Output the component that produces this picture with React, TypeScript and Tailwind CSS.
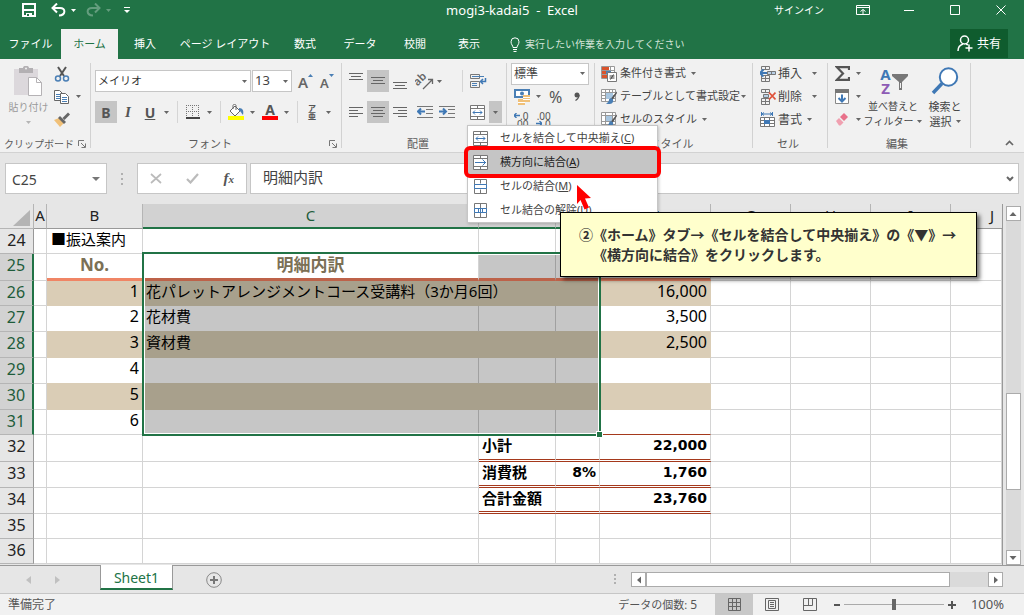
import React from "react";

type Kids = { children?: React.ReactNode };

const Caret = ({ className = "text-[#666]" }: { className?: string }) => (
  <svg width="5" height="3" viewBox="0 0 5 3" className={"shrink-0 " + className} aria-hidden="true">
    <path d="M0 0h5L2.5 3z" fill="currentColor" />
  </svg>
);

const Icon = ({ w = 16, h = 16, children }: Kids & { w?: number; h?: number }) => (
  <svg width={w} height={h} viewBox={`0 0 ${w} ${h}`} fill="none" className="shrink-0" aria-hidden="true">
    {children}
  </svg>
);

const Sep = () => <span className="h-[22px] w-px shrink-0 bg-[#d5d5d5]" />;

const Launcher = () => (
  <Icon w={8} h={8}>
    <path d="M.5 6V.5H6M3 3l4 4M7.5 3.500V7.500H3.500" stroke="#777" />
  </Icon>
);

function Group({
  label,
  className,
  labelClass = "text-[11px]",
  launcher,
  children,
}: Kids & { label: string; className: string; labelClass?: string; launcher?: boolean }) {
  return (
    <section className={"relative flex shrink-0 flex-col " + className}>
      <div className="flex-1">{children}</div>
      <div className="flex h-4 items-center pr-[5px] text-[#5a5a5a]">
        <span className={"flex-1 text-center whitespace-nowrap " + labelClass}>{label}</span>
        {launcher && (
          <button aria-label={label + "の設定"}>
            <Launcher />
          </button>
        )}
      </div>
      <span className="absolute top-1 right-0 bottom-1 w-px bg-[#d2d2d2]" />
    </section>
  );
}

/* ---------- title bar ---------- */

const quickAccess = (
  <div className="flex h-5 flex-1 items-center text-white">
    <button aria-label="上書き保存" className="ml-[22px]">
      <Icon w={14} h={14}>
        <path d="M1 1h12v12H1z" stroke="#fff" strokeWidth="2" />
        <path d="M2 7h10" stroke="#fff" strokeWidth="2" />
        <path d="M4 10h6v4H4z" fill="#fff" />
        <path d="M5 11h2v2H5z" fill="#217346" />
      </Icon>
    </button>
    <button aria-label="元に戻す" className="ml-[15px] flex items-center gap-[5px]">
      <Icon w={15} h={14}>
        <path d="M2 5h7c6 0 6 7-1 7.500" stroke="#fff" strokeWidth="2" />
        <path d="M6 .5L1.500 5 6 9.500" stroke="#fff" strokeWidth="2" />
      </Icon>
      <Caret className="text-white" />
    </button>
    <button aria-label="やり直し" className="ml-[10px] flex items-center gap-[5px] opacity-30">
      <Icon w={15} h={14}>
        <path d="M13 5H6c-6 0-6 7 1 7.500" stroke="#fff" strokeWidth="2" />
        <path d="M9 .5L13.500 5 9 9.500" stroke="#fff" strokeWidth="2" />
      </Icon>
      <Caret className="text-white" />
    </button>
    <button aria-label="クイック アクセス ツール バーのユーザー設定" className="ml-[13px]">
      <Icon w={6} h={6}>
        <path d="M0 .5h6" stroke="#fff" />
        <path d="M0 3h6L3 6z" fill="#fff" />
      </Icon>
    </button>
  </div>
);

const windowButtons = (
  <div className="flex h-5 flex-1 items-center justify-end text-[10px] text-white">
    <button className="mr-4">サインイン</button>
    <button aria-label="リボンの表示オプション" className="flex w-[46px] justify-center">
      <Icon w={14} h={10}>
        <path d="M.5.5h13v9H.5zM.5 2.500h13M7 9V4.500M4.500 6.500L7 4.500l2.500 2" stroke="#fff" />
      </Icon>
    </button>
    <button aria-label="最小化" className="flex w-[46px] justify-center">
      <Icon w={10} h={10}>
        <path d="M0 5.500h10" stroke="#fff" />
      </Icon>
    </button>
    <button aria-label="元のサイズ" className="flex w-[46px] justify-center">
      <Icon w={10} h={10}>
        <path d="M.5.5h9v9h-9z" stroke="#fff" />
      </Icon>
    </button>
    <button aria-label="閉じる" className="flex w-[46px] justify-center">
      <Icon w={10} h={10}>
        <path d="M.5.5l9 9M9.500.5l-9 9" stroke="#fff" />
      </Icon>
    </button>
  </div>
);

const tabs = [
  { label: "ファイル", width: "w-[61px]" },
  { label: "ホーム", width: "w-[57px]" },
  { label: "挿入", width: "w-[54px]" },
  { label: "ページ レイアウト", width: "w-[106px]" },
  { label: "数式", width: "w-[54px]" },
  { label: "データ", width: "w-[56px]" },
  { label: "校閲", width: "w-[54px]" },
  { label: "表示", width: "w-[54px]" },
];

function Header() {
  return (
    <header className="bg-[#217346] text-white">
      <div className="flex h-[29px] items-start">
        {quickAccess}
        <h1 className="h-5 text-[13px] leading-5">mogi3-kadai5 &nbsp;-&nbsp; Excel</h1>
        {windowButtons}
      </div>
      <nav className="flex h-[30px] items-stretch">
        {tabs.map((t, i) => (
          <button
            key={t.label}
            className={
              "shrink-0 text-center text-[11px] whitespace-nowrap " +
              t.width +
              (i === 1 ? " bg-[#f1f1f1] text-[#217346]" : "")
            }
          >
            {t.label}
          </button>
        ))}
        <button className="ml-[14px] flex items-center gap-[5px] text-[10px] whitespace-nowrap text-[#d3e5da]">
          <Icon w={10} h={15}>
            <path d="M3 10.500C3 8.500 1 7.500 1 4.800a4 4 0 018 0C9 7.500 7 8.500 7 10.500zM3 12.500h4M3.500 14.500h3" stroke="#fff" />
          </Icon>
          実行したい作業を入力してください
        </button>
        <button className="mr-4 mb-px ml-auto flex w-[58px] items-center justify-center gap-1 bg-[#0f5c2e] text-[12px]">
          <Icon w={16} h={17}>
            <circle cx="7.500" cy="5" r="4" stroke="#fff" strokeWidth="1.500" />
            <path d="M1 16c0-4 2-6 5-7M9 9c1 .3 1.500.6 2 1M12 9.500v7M8.500 13H15.500" stroke="#fff" strokeWidth="1.500" />
          </Icon>
          共有
        </button>
      </nav>
    </header>
  );
}

/* ---------- ribbon ---------- */

function ClipboardGroup() {
  return (
    <Group label="クリップボード" labelClass="text-[10px]" className="w-[91px]" launcher>
      <div className="flex">
        <button className="flex w-[54px] flex-col items-center pt-[7px] pl-[3px] text-[10px] text-[#9a9a9a]">
          <Icon w={29} h={31}>
            <path d="M0 3h24v26H0z" fill="#dcd8dc" />
            <path d="M5 2h4c0-3 6-3 6 0h4v5H5z" fill="#b3b0b3" />
            <circle cx="12" cy="2.500" r="1" fill="#f1f1f1" />
            <path d="M14.500 11.500h8l5 5v13h-13z" fill="#fff" stroke="#b5b2b5" />
            <path d="M22.500 11.500v5h5" stroke="#b5b2b5" />
          </Icon>
          <span className="leading-5">貼り付け</span>
          <span className="pt-1">
            <Caret className="text-[#b5b5b5]" />
          </span>
        </button>
        <div className="flex flex-col pt-[3px]">
          <button aria-label="切り取り" className="flex h-[23px] items-center">
            <Icon w={16} h={16}>
              <path d="M4 1l6 9M12 1l-6 9" stroke="#555" strokeWidth="2" />
              <circle cx="4" cy="12.500" r="2.500" stroke="#4a7fb5" strokeWidth="1.500" />
              <circle cx="12" cy="12.500" r="2.500" stroke="#4a7fb5" strokeWidth="1.500" />
            </Icon>
          </button>
          <button aria-label="コピー" className="flex h-[23px] items-center gap-[6px]">
            <Icon w={16} h={14}>
              <path d="M.5.5h5l3 3v7h-8z" fill="#fff" stroke="#666" />
              <path d="M2 4.500h4M2 6.500h4M2 8.500h4" stroke="#4a7fb5" />
              <path d="M6.500 3.500h5l3 3v7h-8z" fill="#fff" stroke="#666" />
              <path d="M8 7.500h5M8 9.500h5M8 11.500h5" stroke="#4a7fb5" />
            </Icon>
            <Caret />
          </button>
          <button aria-label="書式のコピー/貼り付け" className="flex h-[23px] items-center">
            <Icon w={17} h={15}>
              <path d="M0 8l5-2 5 5-4 4z" fill="#f0c078" />
              <path d="M6 4l6 6-2 2-6-6z" fill="#666" />
              <path d="M8.500 6L14 .5l2 2L10.500 8z" fill="#666" />
            </Icon>
          </button>
        </div>
      </div>
    </Group>
  );
}

function FontGroup() {
  return (
    <Group label="フォント" className="w-[251px]" launcher>
      <div className="flex flex-col gap-[9px] pt-[11px] pl-1">
        <div className="flex h-[22px] items-stretch gap-px">
          <label className="relative flex w-[156px] items-center">
            <select aria-label="フォント" className="h-full w-full appearance-none border border-[#c6c6c6] bg-white pl-[2px] text-[11px] text-[#333]">
              <option>メイリオ</option>
            </select>
            <span className="pointer-events-none absolute right-1">
              <Caret />
            </span>
          </label>
          <label className="relative flex w-[40px] items-center">
            <select aria-label="フォント サイズ" className="h-full w-full appearance-none border border-[#c6c6c6] bg-white pl-[2px] text-[13px] text-[#444]">
              <option>13</option>
            </select>
            <span className="pointer-events-none absolute right-1">
              <Caret />
            </span>
          </label>
          <button aria-label="フォント サイズの拡大" className="ml-[5px] flex items-start text-[15px] leading-6 font-semibold text-[#666]">
            A
            <span className="pt-1">
              <Icon w={5} h={3}>
                <path d="M0 3h5L2.500 0z" fill="#4a7fb5" />
              </Icon>
            </span>
          </button>
          <button aria-label="フォント サイズの縮小" className="ml-[6px] flex items-start text-[13px] leading-[26px] font-semibold text-[#666]">
            A
            <span className="pt-1">
              <Caret className="text-[#4a7fb5]" />
            </span>
          </button>
        </div>
        <div className="flex h-[22px] items-center text-[#555]">
          <button className="h-[22px] w-[22px] bg-[#c5c5c5] text-[14px] font-bold">B</button>
          <button className="w-[22px] font-['Liberation_Serif',serif] text-[15px] font-bold italic">I</button>
          <button className="w-[22px] text-[14px] font-bold underline">U</button>
          <span className="mr-[8px] ml-[3px]">
            <Caret />
          </span>
          <Sep />
          <button aria-label="罫線" className="ml-2 flex items-center gap-[7px]">
            <Icon w={14} h={14}>
              <path d="M.5 0v13M6.500 0v13M12.500 0v13M0 .5h13M0 6.500h13" stroke="#777" strokeDasharray="1 1" />
              <path d="M0 13h14" stroke="#444" strokeWidth="2" />
            </Icon>
            <Caret />
          </button>
          <span className="w-2" />
          <Sep />
          <button aria-label="塗りつぶしの色" className="ml-[7px] flex items-center gap-[5px]">
            <Icon w={17} h={16}>
              <path d="M7 2l5 5-5 5-5-5zM5 5V1.500c0-1.500 3-1.500 3 0V6" fill="#fff" stroke="#666" />
              <path d="M11 4c4 0 5 3 4 7-2-2-2-4-4-4z" fill="#4a7fb5" />
              <path d="M0 12h16v4H0z" fill="#ffff00" />
            </Icon>
            <Caret />
          </button>
          <button aria-label="フォントの色" className="ml-[7px] flex items-center gap-[6px]">
            <span className="flex w-4 flex-col items-center text-[14px] leading-3 font-bold">
              A
              <span className="h-1 w-full bg-[#ff0000]" />
            </span>
            <Caret />
          </button>
          <span className="w-2" />
          <Sep />
          <button aria-label="ふりがなの表示/非表示" className="ml-[10px] flex items-center gap-[10px]">
            <span className="flex flex-col text-center text-[8px] leading-[8px] font-bold">
              <span>ア</span>
              <span>亜</span>
            </span>
            <Caret />
          </button>
        </div>
      </div>
    </Group>
  );
}

const AlignIcon = ({ d }: { d: string }) => (
  <Icon w={14} h={16}>
    <path d={d} stroke="#666" />
  </Icon>
);

const alignTop = [
  { label: "上揃え", d: "M0 .5h14M2 3.500h10M0 6.500h14", on: false },
  { label: "上下中央揃え", d: "M0 4.500h14M2 7.500h10M0 10.500h14", on: true },
  { label: "下揃え", d: "M0 9.500h14M2 12.500h10M0 15.500h14", on: false },
];
const alignBottom = [
  { label: "左揃え", d: "M0 3.500h14M0 6.500h9M0 9.500h14M0 12.500h9", on: false },
  { label: "中央揃え", d: "M0 3.500h14M2 6.500h10M0 9.500h14M2 12.500h10", on: true },
  { label: "右揃え", d: "M0 3.500h14M5 6.500h9M0 9.500h14M5 12.500h9", on: false },
];

const AlignButtons = ({ items }: { items: typeof alignTop }) => (
  <>
    {items.map((a) => (
      <button
        key={a.label}
        aria-label={a.label}
        className={"flex h-[22px] w-[22px] items-center justify-center" + (a.on ? " bg-[#c5c5c5]" : "")}
      >
        <AlignIcon d={a.d} />
      </button>
    ))}
  </>
);

const MergeCenterIcon = () => (
  <Icon w={15} h={15}>
    <path d="M.5.5h14v14H.5zM.5 3.500h14M.5 11.500h14M7.500.5v3M7.500 11.500v3" fill="#fff" stroke="#777" />
    <path d="M3 7.500h9M5 5.500l-2 2 2 2M10 5.500l2 2-2 2" stroke="#3f78b5" />
  </Icon>
);
const MergeAcrossIcon = () => (
  <Icon w={15} h={15}>
    <path d="M.5.5h14v14H.5zM.5 3.500h14M.5 11.500h14M7.500.5v3M7.500 11.500v3" fill="#fff" stroke="#777" />
    <path d="M2 7.500h11M9.500 4.500l3 3-3 3" stroke="#3f78b5" />
  </Icon>
);
const MergeCellsIcon = () => (
  <Icon w={15} h={15}>
    <path d="M1.500.5h12v14h-12zM7.500.5v4M7.500 10.500v4" fill="#fff" stroke="#777" />
    <path d="M1.500 5.500h12v4h-12z" fill="#fff" stroke="#3f78b5" />
  </Icon>
);
const UnmergeIcon = () => (
  <Icon w={15} h={15}>
    <path d="M1.500.5h12v14h-12zM7.500.5v14" fill="#fff" stroke="#777" />
    <path d="M1.500 5.500h12v4h-12zM5.500 5.500v4M9.500 5.500v4M7.500 5.500v4" fill="#fff" stroke="#3f78b5" />
  </Icon>
);

const menuItems = [
  { text: "セルを結合して中央揃え", key: "C", icon: <MergeCenterIcon /> },
  { text: "横方向に結合", key: "A", icon: <MergeAcrossIcon /> },
  { text: "セルの結合", key: "M", icon: <MergeCellsIcon /> },
  { text: "セル結合の解除", key: "U", icon: <UnmergeIcon /> },
];

function MergeMenu() {
  return (
    <div
      role="menu"
      className="absolute top-6 left-0 z-20 w-[191px] border border-[#c6c6c6] bg-white text-[11px] text-[#444] shadow-[1px_1px_3px_rgba(0,0,0,0.2)]"
    >
      {menuItems.map((m, i) => (
        <div key={m.key} className="relative">
          <button
            role="menuitem"
            className={
              "flex h-6 w-full items-center gap-3 pl-[5px] whitespace-nowrap" + (i === 1 ? " bg-[#c5c5c5] text-[#222]" : "")
            }
          >
            {m.icon}
            <span>
              {m.text}(<u>{m.key}</u>)
            </span>
          </button>
          {i === 1 && (
            <span className="pointer-events-none absolute -inset-x-1 -inset-y-1 rounded-md border-4 border-[#ff0000]" />
          )}
        </div>
      ))}
      <span className="pointer-events-none absolute top-[59px] left-[109px]">
        <Icon w={15} h={26}>
          <path d="M0 0l14 13-6 .5 4 9-4.500 2-4-9.500L0 19z" fill="#ff0000" />
        </Icon>
      </span>
    </div>
  );
}

function AlignGroup() {
  return (
    <Group label="配置" className="w-[165px]" launcher>
      <div className="flex pt-[11px] pl-[3px]">
        <div className="flex w-[117px] flex-col gap-[9px]">
          <div className="flex h-[22px] items-center">
            <AlignButtons items={alignTop} />
            <button aria-label="方向" className="ml-1 flex items-center gap-[2px]">
              <Icon w={20} h={20}>
                <text
                  x="2"
                  y="14"
                  transform="rotate(-45 4 14)"
                  fontSize="11"
                  fontFamily="Noto Sans"
                  fontWeight="600"
                  fill="#666"
                >
                  ab
                </text>
                <path d="M8 18l9-9M13 8.500h4.500V13" stroke="#666" strokeWidth="1.300" />
              </Icon>
              <Caret />
            </button>
          </div>
          <div className="flex h-[22px] items-center">
            <AlignButtons items={alignBottom} />
            <button aria-label="インデントを減らす" className="ml-[6px]">
              <Icon w={16} h={14}>
                <path d="M0 1.500h16M9 4.500h7M9 8.500h7M0 12.500h16" stroke="#777" />
                <path d="M1 6.500h7M4 3.500l-3 3 3 3" stroke="#3f78b5" strokeWidth="2" />
              </Icon>
            </button>
            <button aria-label="インデントを増やす" className="ml-[6px]">
              <Icon w={16} h={14}>
                <path d="M0 1.500h16M9 4.500h7M9 8.500h7M0 12.500h16" stroke="#777" />
                <path d="M0 6.500h7M4 3.500l3 3-3 3" stroke="#3f78b5" strokeWidth="2" />
              </Icon>
            </button>
          </div>
        </div>
        <Sep />
        <div className="flex flex-col gap-[9px] pl-1">
          <button aria-label="折り返して全体を表示する" className="flex h-[22px] items-center pl-[3px]">
            <Icon w={17} h={16}>
              <path d="M.5 1.500h9v4h-9zM.5 8.500h9v6h-9z" stroke="#777" />
              <path d="M2 3.500h12M2 10.500h5M2 12.500h5" stroke="#4a7fb5" />
              <path d="M15.500 5v3.500H11M13 6l-2.500 2.500L13 11" stroke="#3f78b5" strokeWidth="1.500" />
            </Icon>
          </button>
          <div className="relative flex h-[22px] items-center pl-[3px]">
            <button aria-label="セルを結合して中央揃え">
              <MergeCenterIcon />
            </button>
            <button aria-label="結合オプション" className="ml-1 flex h-[22px] w-[13px] items-center justify-center bg-[#c5c5c5]">
              <Caret />
            </button>
            <MergeMenu />
          </div>
        </div>
      </div>
    </Group>
  );
}

function NumberGroup() {
  return (
    <Group label="数値" className="w-[88px]" launcher>
      <div className="flex flex-col pt-[3px] pl-1 text-[#555]">
        <label className="relative flex h-[23px] w-[78px] items-center">
          <select aria-label="表示形式" className="h-[22px] w-full appearance-none border border-[#c6c6c6] bg-white pl-[2px] text-[12px] text-[#444]">
            <option>標準</option>
          </select>
          <span className="pointer-events-none absolute right-1">
            <Caret />
          </span>
        </label>
        <div className="flex h-[23px] items-center">
          <button aria-label="通貨表示形式" className="ml-[3px] flex items-center gap-[5px]">
            <Icon w={17} h={16}>
              <path d="M1 1h14v7H1z" fill="#fff" stroke="#4a7fb5" strokeWidth="2" />
              <circle cx="8" cy="4.500" r="2" fill="#4a7fb5" />
              <path d="M9 6h7v7H9zM4 10h7v6H4z" fill="#f0c078" />
              <path d="M9 8.500h7M9 10.500h7M4 13.500h7" stroke="#fff" />
            </Icon>
            <Caret />
          </button>
          <button className="ml-2 text-[16px] leading-none">%</button>
          <button aria-label="桁区切りスタイル" className="ml-3">
            <Icon w={6} h={9}>
              <circle cx="3" cy="3" r="2.500" fill="#555" />
              <path d="M5 3c0 3-1 4-3.500 5.500" stroke="#555" strokeWidth="1.300" />
            </Icon>
          </button>
        </div>
        <div className="flex h-[23px] items-center gap-2 pl-[3px]">
          <button aria-label="小数点以下の表示桁数を増やす" className="flex flex-col text-[10px] leading-[8px]">
            <span className="flex items-center">
              <Icon w={6} h={5}>
                <path d="M0 2.500h6M2.500 0L0 2.500 2.500 5" stroke="#3f78b5" strokeWidth="1.300" />
              </Icon>
              .0
            </span>
            <span className="text-right">00</span>
          </button>
          <button aria-label="小数点以下の表示桁数を減らす" className="flex flex-col text-[10px] leading-[8px]">
            <span className="text-right">.00</span>
            <span className="flex items-center">
              <Icon w={6} h={5}>
                <path d="M0 2.500h6M3.500 0L6 2.500 3.500 5" stroke="#3f78b5" strokeWidth="1.300" />
              </Icon>
              .0
            </span>
          </button>
        </div>
      </div>
    </Group>
  );
}

const ConditionalIcon = () => (
  <Icon w={17} h={16}>
    <path d="M.5.5h13v12H.5zM.5 4.500h13M.5 8.500h13M5.500.5v12M9.500.5v12" fill="#fff" stroke="#999" />
    <path d="M1 1h7v3H1zM1 9h5v3H1z" fill="#d9532c" />
    <path d="M1 5h5v3H1z" fill="#d9532c" />
    <path d="M5 5h5v3H5z" fill="#4a7fb5" />
    <path d="M6.500 6.500h9v9h-9z" fill="#fff" stroke="#777" />
    <path d="M8.500 10h5M8.500 12h5M12.500 8.500l-3 5" stroke="#444" />
  </Icon>
);
const TableStyleIcon = () => (
  <Icon w={17} h={16}>
    <path d="M.5.5h14v12H.5zM.5 3.500h14M.5 6.500h14M.5 9.500h14M4.500.5v12M8.500.5v12M11.500.5v12" fill="#fff" stroke="#999" />
    <path d="M5 4h7v6H5z" fill="#a8c6e0" />
    <path d="M15.500 2.500L10 9.500l1.500 1.500 4.500-7z" fill="#555" />
    <path d="M10 9c-3 1-1 4-5 5.500 4 1.500 8 0 7-4z" fill="#4a7fb5" />
  </Icon>
);
const CellStyleIcon = () => (
  <Icon w={17} h={16}>
    <path d="M.5.5h14v12H.5zM.5 3.500h14M.5 9.500h14M4.500.5v12M11.500.5v12" fill="#fff" stroke="#999" />
    <path d="M5 4h6v5H5z" fill="#a8c6e0" />
    <path d="M15.500 2.500L10 9.500l1.500 1.500 4.500-7z" fill="#555" />
    <path d="M10 9c-3 1-1 4-5 5.500 4 1.500 8 0 7-4z" fill="#4a7fb5" />
  </Icon>
);
const InsertIcon = () => (
  <Icon w={16} h={16}>
    <path d="M1.500.5h8v3h-8zM5.500.5v3M1.500 9.500h8v6h-8zM5.500 9.500v6M1.500 12.500h8" stroke="#777" />
    <path d="M7.500 5.500h8v3h-8zM11.500 5.500v3" fill="#b8cfe6" stroke="#777" />
    <path d="M0 7h7M3.500 3.500L0 7l3.500 3.500" stroke="#3f78b5" strokeWidth="2" />
  </Icon>
);
const DeleteIcon = () => (
  <Icon w={16} h={16}>
    <path d="M1.500.5h8v3h-8zM5.500.5v3M1.500 9.500h8v6h-8zM5.500 9.500v6M1.500 12.500h8" stroke="#777" />
    <path d="M3.500 5.500h5v3h-5z" fill="#b8cfe6" stroke="#777" />
    <path d="M9 3.500l6.500 7M15.500 3.500L9 10.500" stroke="#e0533a" strokeWidth="1.800" />
  </Icon>
);
const FormatIcon = () => (
  <Icon w={16} h={16}>
    <path d="M1.500 0v4M12.500 0v4M2 2h10M4 .5L2 2l2 1.500M10 .5L12 2l-2 1.500" stroke="#3f78b5" />
    <path d="M.5 5.500h14v9H.5zM.5 8.500h14M.5 11.500h14M4.500 5.500v9M9.500 5.500v9" fill="#fff" stroke="#777" />
    <path d="M4 8h6v4H4z" fill="#3f78b5" />
  </Icon>
);

const RowButton = ({ icon, label, gap = "gap-[5px]" }: { icon: React.ReactNode; label: string; gap?: string }) => (
  <button className={"flex h-[23px] items-center whitespace-nowrap " + gap}>
    <span className="flex items-center gap-[2px]">
      {icon}
      {label}
    </span>
    <Caret />
  </button>
);

function EditGroup() {
  return (
    <Group label="編集" className="w-[143px]">
      <div className="flex">
        <div className="flex flex-col pt-[3px] pl-[7px]">
          <button aria-label="オート SUM" className="flex h-[23px] items-center gap-[6px]">
            <Icon w={15} h={15}>
              <path d="M14 4V1.200H2L8 7.500 2 13.800h12V11" stroke="#555" strokeWidth="2.200" />
            </Icon>
            <Caret />
          </button>
          <button aria-label="フィル" className="flex h-[23px] items-center gap-[6px]">
            <Icon w={15} h={16}>
              <path d="M.5 1.500h13v13H.5z" fill="#fff" stroke="#888" />
              <path d="M0 0h14v4H0z" fill="#777" />
              <path d="M7 5.500V12M3.500 9L7 12.500 10.500 9" stroke="#3f78b5" strokeWidth="2" />
            </Icon>
            <Caret />
          </button>
          <button aria-label="クリア" className="flex h-[23px] items-center gap-[6px]">
            <Icon w={15} h={13}>
              <path d="M5 4l4-4 4 4-4 4z" fill="#e8718a" />
              <path d="M1 8l3-3 4.500 4.500-3 3H4z" fill="#f0a0b0" />
            </Icon>
            <Caret />
          </button>
        </div>
        <button className="flex w-[60px] flex-col items-center pt-2 pl-1 text-[10px] whitespace-nowrap text-[#444]">
          <span className="flex h-8 items-start pl-[3px]">
            <span className="flex flex-col text-center text-[15px] leading-[14px] font-bold">
              <span className="text-[#3f78b5]">A</span>
              <span className="text-[#8e5bb5]">Z</span>
            </span>
            <span className="pt-[7px]">
              <Icon w={18} h={17}>
                <path d="M1 0h16v2l-6 6v8H8V8L1 2z" fill="#777" />
                <path d="M9.500 9v5" stroke="#f1f1f1" />
              </Icon>
            </span>
          </span>
          <span className="leading-[15px]">並べ替えと</span>
          <span className="flex items-center gap-1 leading-[15px]">
            フィルター
            <Caret />
          </span>
        </button>
        <button className="flex w-[48px] flex-col items-center pt-2 text-[11px] text-[#444]">
          <span className="h-8">
            <Icon w={28} h={28}>
              <circle cx="17.500" cy="10" r="8.700" fill="#fff" stroke="#3f78b5" strokeWidth="2" />
              <path d="M11 16.500L2 26" stroke="#3f78b5" strokeWidth="3.500" />
            </Icon>
          </span>
          <span className="leading-[15px]">検索と</span>
          <span className="flex items-center gap-1 leading-[15px]">
            選択
            <Caret />
          </span>
        </button>
      </div>
    </Group>
  );
}

function Ribbon() {
  return (
    <div className="flex h-[94px] border-b border-[#d2d2d2] bg-[#f1f1f1]">
      <ClipboardGroup />
      <FontGroup />
      <AlignGroup />
      <NumberGroup />
      <Group label="スタイル" className="w-[158px]">
        <div className="flex flex-col items-start pt-[3px] pl-[6px] text-[11px] text-[#444]">
          <RowButton icon={<ConditionalIcon />} label="条件付き書式" />
          <RowButton icon={<TableStyleIcon />} label="テーブルとして書式設定" gap="gap-px" />
          <RowButton icon={<CellStyleIcon />} label="セルのスタイル" />
        </div>
      </Group>
      <Group label="セル" className="w-[75px]">
        <div className="flex flex-col items-start pt-[3px] pl-[7px] text-[12px] text-[#444]">
          <RowButton icon={<InsertIcon />} label="挿入" gap="gap-[10px]" />
          <RowButton icon={<DeleteIcon />} label="削除" gap="gap-[10px]" />
          <RowButton icon={<FormatIcon />} label="書式" />
        </div>
      </Group>
      <EditGroup />
      <div className="flex flex-1 items-end justify-end pr-[10px] pb-[6px]">
        <button aria-label="リボンを折りたたむ">
          <Icon w={9} h={6}>
            <path d="M1 5l3.500-3.500L8 5" stroke="#666" strokeWidth="1.700" />
          </Icon>
        </button>
      </div>
    </div>
  );
}

/* ---------- formula bar ---------- */

function FormulaBar() {
  return (
    <div className="flex h-[51px] items-start bg-[#e6e6e6] pt-[10px] pr-[5px] pl-[5px]">
      <div className="flex h-[31px] w-[102px] items-center border border-[#c6c6c6] bg-white pr-[6px]">
        <input aria-label="名前ボックス" defaultValue="C25" className="w-full min-w-0 bg-transparent pt-[2px] pl-[6px] text-[14px] text-[#444] outline-none" />
        <button aria-label="名前の一覧">
          <Icon w={8} h={4}>
            <path d="M0 0h8L4 4z" fill="#777" />
          </Icon>
        </button>
      </div>
      <span className="flex h-[31px] w-[30px] items-center justify-center">
        <Icon w={2} h={12}>
          <path d="M0 0h2v2H0zM0 5h2v2H0zM0 10h2v2H0z" fill="#b0b0b0" />
        </Icon>
      </span>
      <div className="flex h-[31px] w-[110px] items-center justify-around border border-[#c6c6c6] bg-white">
        <button aria-label="キャンセル">
          <Icon w={12} h={11}>
            <path d="M1 1l10 9M11 1L1 10" stroke="#bbb" strokeWidth="1.700" />
          </Icon>
        </button>
        <button aria-label="入力">
          <Icon w={13} h={11}>
            <path d="M1 6l3.500 3.500L12 1" stroke="#bbb" strokeWidth="2.200" />
          </Icon>
        </button>
        <button aria-label="関数の挿入" className="font-['Liberation_Serif',serif] text-[15px] leading-none font-bold text-[#555] italic">
          f<span className="text-[11px]">x</span>
        </button>
      </div>
      <div className="ml-[3px] flex h-[31px] flex-1 items-center border border-[#c6c6c6] bg-white pr-1">
        <input aria-label="数式バー" defaultValue="明細内訳" className="min-w-0 flex-1 bg-transparent pb-1 pl-3 text-[15px] leading-5 text-[#444] outline-none" />
        <button aria-label="数式バーの展開">
          <Icon w={8} h={6}>
            <path d="M1 1l3 3 3-3" stroke="#666" strokeWidth="2" />
          </Icon>
        </button>
      </div>
    </div>
  );
}

/* ---------- worksheet ---------- */

const cols = ["A", "B", "C", "D", "E", "F", "G", "H", "I", "J"];

type Row = { n: number; h: string; cells?: Record<string, string> };

const rows: Row[] = [
  { n: 24, h: "h-[25px]", cells: { B: "■振込案内" } },
  { n: 25, h: "h-[27px]", cells: { B: "No.", C: "明細内訳" } },
  { n: 26, h: "h-[25px]", cells: { B: "1", C: "花パレットアレンジメントコース受講料（3か月6回）", F: "16,000" } },
  { n: 27, h: "h-[26px]", cells: { B: "2", C: "花材費", F: "3,500" } },
  { n: 28, h: "h-[26px]", cells: { B: "3", C: "資材費", F: "2,500" } },
  { n: 29, h: "h-[26px]", cells: { B: "4" } },
  { n: 30, h: "h-[26px]", cells: { B: "5" } },
  { n: 31, h: "h-[25px]", cells: { B: "6" } },
  { n: 32, h: "h-[27px]", cells: { D: "小計", F: "22,000" } },
  { n: 33, h: "h-[26px]", cells: { D: "消費税", E: "8%", F: "1,760" } },
  { n: 34, h: "h-[26px]", cells: { D: "合計金額", F: "23,760" } },
  { n: 35, h: "h-[25px]" },
  { n: 36, h: "h-[25px]" },
];

function cellClass(n: number, c: string): string {
  const inTable = "BCDEF".includes(c);
  const selected = "CDE".includes(c) && n >= 25 && n <= 31;
  const banded = inTable && (n === 26 || n === 28 || n === 30);
  const beforeBand = inTable && (n === 27 || n === 29);
  const totals = "DEF".includes(c) && n >= 32 && n <= 34;
  const out: string[] = ["overflow-visible p-0 align-top whitespace-nowrap border-r"];

  if (banded) out.push(selected ? "bg-[#a8a08c] border-r-[#a8a08c]" : "bg-[#dacdb6] border-r-[#dacdb6]");
  else if (selected && !(n === 25 && c === "C")) out.push("bg-[#c6c6c6] border-r-[#a0a0a0]");
  else out.push("bg-white border-r-[#d4d4d4]");

  if (n === 25 && inTable) out.push(selected ? "border-b-3 border-b-[#bd6249]" : "border-b-3 border-b-[#f08565]");
  else if (totals) out.push("border-b-3 [border-bottom-style:double] border-b-[#a5391c]");
  else if (banded || beforeBand) out.push(selected ? "border-b border-b-[#a8a08c]" : "border-b border-b-[#dacdb6]");
  else if (n === 31 && c === "F") out.push("border-b border-b-[#a5391c]");
  else out.push("border-b border-b-[#d4d4d4]");

  out.push(n === 25 ? "leading-[22px]" : "leading-5");
  if (n === 25) out.push("text-center text-[17px] font-bold text-[#7b7055]");
  else if (totals) out.push(c === "D" ? "pl-[3px] text-[15px] font-bold" : "pr-[3px] text-right font-['DejaVu_Sans',sans-serif] text-[14px] font-bold");
  else if (c === "B" && n > 25) out.push("pr-[3px] text-right text-[16px]");
  else if (c === "F") out.push("pr-[3px] text-right text-[16px]");
  else out.push(c === "B" ? "pl-1 text-[15px]" : "pl-[3px] text-[15px]");
  return out.join(" ");
}

const ScrollButton = ({ label, d }: { label: string; d: string }) => (
  <button aria-label={label} className="flex h-[15px] w-[15px] shrink-0 items-center justify-center border border-[#ababab] bg-white">
    <Icon w={8} h={8}>
      <path d={d} fill="#666" />
    </Icon>
  </button>
);

function Sheet() {
  return (
    <div className="flex flex-1 bg-[#e6e6e6]">
      <div className="relative flex-1 border-r border-[#999]">
        <table className="w-full table-fixed border-separate border-spacing-0 text-black">
          <colgroup>
            <col className="w-[34px]" />
            <col className="w-[13px]" />
            <col className="w-24" />
            <col className="w-[336px]" />
            <col className="w-[77px]" />
            <col className="w-11" />
            <col className="w-[111px]" />
            <col className="w-20" />
            <col className="w-20" />
            <col className="w-20" />
            <col />
          </colgroup>
          <thead>
            <tr className="h-[25px]">
              <th className="border-r border-b border-[#b5b5b5] p-0" aria-label="すべて選択">
                <span className="flex justify-end pt-1 pr-[3px]">
                  <Icon w={17} h={16}>
                    <path d="M17 0v16H0z" fill="#b4b4b4" />
                  </Icon>
                </span>
              </th>
              {cols.map((c) => (
                <th
                  key={c}
                  scope="col"
                  className={
                    "border-r border-r-[#b5b5b5] p-0 align-top text-[15px] leading-[22px] font-normal " +
                    ("CDE".includes(c)
                      ? "border-b-2 border-b-[#217346] bg-[#d2d2d2] text-[#1e5c3a]"
                      : "border-b border-b-[#999] text-[#222]") +
                    (c === "J" ? " border-r-0 pr-2 text-right" : " text-center")
                  }
                >
                  {c}
                </th>
              ))}
            </tr>
          </thead>
          <tbody>
            {rows.map((r) => (
              <tr key={r.n} className={r.h}>
                <th
                  scope="row"
                  className={
                    "border-b border-b-[#b5b5b5] p-0 text-center align-top text-[16px] leading-[22px] font-normal " +
                    (r.n >= 25 && r.n <= 31
                      ? "border-r-2 border-r-[#217346] bg-[#d2d2d2] text-[#1e5c3a]"
                      : "border-r border-r-[#999] text-[#222]")
                  }
                >
                  {r.n}
                </th>
                {cols.map((c) => (
                  <td key={c} className={cellClass(r.n, c)}>
                    {r.cells?.[c]}
                  </td>
                ))}
              </tr>
            ))}
          </tbody>
        </table>
        {/* selection frame around C25:E31 */}
        <div className="pointer-events-none absolute top-12 left-[142px] h-[184px] w-[459px] border-2 border-[#217346]">
          <div className="h-full w-full border border-white" />
          <span className="absolute -right-1 -bottom-1 h-[7px] w-[7px] border border-white bg-[#217346]" />
        </div>
      </div>
      <div className="flex w-[21px] flex-col items-center pt-[2px] pr-[1px]">
        <ScrollButton label="上へスクロール" d="M4 2l3.500 4h-7z" />
        <div className="flex w-[15px] flex-1 flex-col bg-[#dadada]">
          <div className="flex-[173]" />
          <div className="h-[97px] border border-[#ababab] bg-white" />
          <div className="flex-[60]" />
        </div>
        <ScrollButton label="下へスクロール" d="M4 6L.5 2h7z" />
      </div>
    </div>
  );
}

function SheetTabs() {
  return (
    <div className="flex h-7 border-t border-[#999] bg-[#e6e6e6] pr-[21px]">
      <div className="flex w-[100px] items-center gap-6 pl-[26px]">
        <button aria-label="前のシート">
          <Icon w={5} h={8}>
            <path d="M5 0v8L0 4z" fill="#c0c0c0" />
          </Icon>
        </button>
        <button aria-label="次のシート">
          <Icon w={5} h={8}>
            <path d="M0 0v8l5-4z" fill="#c0c0c0" />
          </Icon>
        </button>
      </div>
      <button className="-mt-px mb-[3px] flex w-[73px] items-center justify-center border-x border-b-2 border-x-[#999] border-b-[#217346] bg-white pt-[2px] text-[14px] text-[#217346]">
        Sheet1
      </button>
      <button aria-label="新しいシート" className="ml-[33px]">
        <Icon w={16} h={16}>
          <circle cx="8" cy="8" r="7.300" stroke="#888" />
          <path d="M8 4v8M4 8h8" stroke="#777" strokeWidth="2" />
        </Icon>
      </button>
      <span className="flex flex-1 items-center justify-end pr-[15px]">
        <Icon w={2} h={11}>
          <path d="M0 0h2v2H0zM0 4h2v2H0zM0 8h2v2H0z" fill="#b0b0b0" />
        </Icon>
      </span>
      <div className="flex w-[372px] shrink-0 items-center">
        <ScrollButton label="左へスクロール" d="M6 .5v7L2 4z" />
        <div className="flex h-[15px] flex-1 bg-[#dadada]">
          <div className="w-[304px] border border-[#ababab] bg-white" />
        </div>
        <ScrollButton label="右へスクロール" d="M2 .5v7L6 4z" />
      </div>
    </div>
  );
}

function StatusBar() {
  return (
    <footer className="flex h-[22px] items-center border-t border-[#c6c6c6] bg-[#f1f1f1] pr-5 pl-2 text-[12px] text-[#555]">
      <span className="flex-1">準備完了</span>
      <span className="mr-[18px] text-[11px]">
        データの個数: <span className="text-[12px]">5</span>
      </span>
      <button aria-label="標準" className="flex h-full w-[38px] items-center justify-center bg-[#c8c8c8]">
        <Icon w={13} h={13}>
          <path d="M.5.5h12v12H.5zM.5 4.500h12M.5 8.500h12M4.500.5v12M8.500.5v12" stroke="#666" />
        </Icon>
      </button>
      <button aria-label="ページ レイアウト" className="flex w-[38px] items-center justify-center">
        <Icon w={14} h={13}>
          <path d="M.5.5h13v12H.5zM3.500 2.500h7v8h-7zM5 4.500h4M5 6.500h4M5 8.500h4" stroke="#666" />
        </Icon>
      </button>
      <button aria-label="改ページ プレビュー" className="flex w-[38px] items-center justify-center">
        <Icon w={14} h={13}>
          <path d="M.5.5h13v12H.5zM.5 7.500h9v-7M5.500.5v7" stroke="#666" />
        </Icon>
      </button>
      <button aria-label="縮小" className="ml-[5px]">
        <Icon w={6} h={8}>
          <path d="M0 4h6" stroke="#555" strokeWidth="2" />
        </Icon>
      </button>
      <input
        type="range"
        aria-label="ズーム"
        min={0}
        max={100}
        defaultValue={50}
        className="mx-1 h-3 w-[100px] appearance-none bg-transparent [&::-webkit-slider-runnable-track]:h-px [&::-webkit-slider-runnable-track]:bg-[#aaa] [&::-webkit-slider-thumb]:-mt-[5px] [&::-webkit-slider-thumb]:h-[11px] [&::-webkit-slider-thumb]:w-1 [&::-webkit-slider-thumb]:appearance-none [&::-webkit-slider-thumb]:bg-[#666]"
      />
      <button aria-label="拡大">
        <Icon w={8} h={8}>
          <path d="M0 4h8M4 0v8" stroke="#555" strokeWidth="2" />
        </Icon>
      </button>
      <span className="w-12 text-right text-[13px]">100%</span>
    </footer>
  );
}

export default function App() {
  return (
    <div className="relative flex min-h-screen flex-col overflow-hidden font-['Noto_Sans','Noto_Sans_CJK_JP',sans-serif]">
      <Header />
      <Ribbon />
      <FormulaBar />
      <Sheet />
      <SheetTabs />
      <StatusBar />
      <aside className="absolute top-[212px] left-[560px] z-30 w-[417px] border border-black bg-[#ffffcc] pt-[11px] pb-3 pl-[18px] font-['Noto_Sans_CJK_JP',sans-serif] text-[14px] leading-5 font-bold whitespace-nowrap text-[#333] shadow-[3px_3px_4px_rgba(0,0,0,0.55)]">
        <p>②《ホーム》タブ→《セルを結合して中央揃え》の《▼》→</p>
        <p className="pl-[14px]">《横方向に結合》をクリックします。</p>
      </aside>
    </div>
  );
}
